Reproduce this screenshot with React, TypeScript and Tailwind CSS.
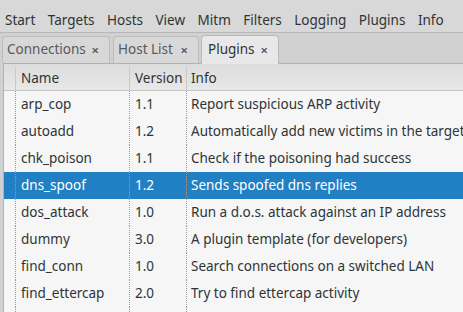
import React from "react";

const menus = ["Start", "Targets", "Hosts", "View", "Mitm", "Filters", "Logging", "Plugins", "Info"];

const plugins = [
  { name: "arp_cop", version: "1.1", info: "Report suspicious ARP activity" },
  { name: "autoadd", version: "1.2", info: "Automatically add new victims in the target range" },
  { name: "chk_poison", version: "1.1", info: "Check if the poisoning had success" },
  { name: "dns_spoof", version: "1.2", info: "Sends spoofed dns replies" },
  { name: "dos_attack", version: "1.0", info: "Run a d.o.s. attack against an IP address" },
  { name: "dummy", version: "3.0", info: "A plugin template (for developers)" },
  { name: "find_conn", version: "1.0", info: "Search connections on a switched LAN" },
  { name: "find_ettercap", version: "2.0", info: "Try to find ettercap activity" },
  { name: "find_ip", version: "1.0", info: "Search an unused IP address in the subnet" },
];

function Tab({ label, width, active }: { label: string; width: string; active?: boolean }) {
  return (
    <div
      className={
        active
          ? `flex shrink-0 items-center justify-between h-[29px] mt-[2px] pl-[6px] pr-[10px] bg-[#e8e8e8] border border-b-0 border-[#b9b9b9] rounded-t-[4px] -mb-px ${width}`
          : `flex shrink-0 items-center justify-between h-[27px] mt-[3px] pl-[4px] pr-[10px] bg-[#d8d8d8] border border-b-0 border-[#bcbcbc] rounded-t-[4px] ${width}`
      }
    >
      <span className={active ? "text-[#2e3436]" : "text-[#555b5c]"}>{label}</span>
      <span className="text-[13px] font-semibold text-[#4a5052]">×</span>
    </div>
  );
}

export default function App() {
  return (
    <div
      className="w-[463px] h-[312px] overflow-hidden bg-[#d1d1d1] text-[13.5px] text-[#2e3436] leading-none"
      style={{ fontFamily: '"Noto Sans", "DejaVu Sans", sans-serif' }}
    >
      <div className="flex h-[33px] items-start pt-[14px] bg-[#d8d8d8] border-b border-[#b8b8b8] pl-[5px] gap-[12.5px] whitespace-nowrap">
        {menus.map((m) => (
          <span key={m} className="shrink-0">{m}</span>
        ))}
      </div>

      <div className="flex h-[30px] items-start pl-[2px] whitespace-nowrap">
        <Tab label="Connections" width="w-[108px]" />
        <div className="w-[3px] shrink-0" />
        <Tab label="Host List" width="w-[86px]" />
        <div className="w-[2px] shrink-0" />
        <Tab label="Plugins" width="w-[78px]" active />
      </div>

      <div className="ml-[3px] border-l border-t border-[#b2b2b2] bg-[#f6f6f6] h-full">
        <div className="flex h-[27px] items-center pt-[3px] bg-gradient-to-b from-[#dcdcdc] to-[#e8e8e8] border-b border-[#c4c4c4] whitespace-nowrap">
          <div className="w-[12px] shrink-0 h-full border-r border-[#c9c9c9]" />
          <div className="w-[114px] shrink-0 h-full flex items-center pl-[5px] border-r border-[#c9c9c9]">Name</div>
          <div className="w-[57px] shrink-0 h-full flex items-center pl-[5px] border-r border-[#c9c9c9]">Version</div>
          <div className="flex-1 h-full flex items-center pl-[4px]">Info</div>
        </div>
        {plugins.map((p) => {
          const sel = p.name === "dns_spoof";
          return (
            <div
              key={p.name}
              className={
                sel
                  ? "flex h-[27px] items-center whitespace-nowrap bg-[#2180c3] text-white"
                  : "flex h-[27px] items-center whitespace-nowrap"
              }
            >
              <div className="w-[12px] shrink-0 h-full border-r border-dotted border-[#9a9a9a]" />
              <div className="w-[114px] shrink-0 h-full flex items-center pl-[5px] border-r border-dotted border-[#9a9a9a]">{p.name}</div>
              <div className="w-[57px] shrink-0 h-full flex items-center pl-[5px] border-r border-dotted border-[#9a9a9a]">{p.version}</div>
              <div className="shrink-0 h-full flex items-center pl-[4px]">{p.info}</div>
            </div>
          );
        })}
      </div>
    </div>
  );
}
